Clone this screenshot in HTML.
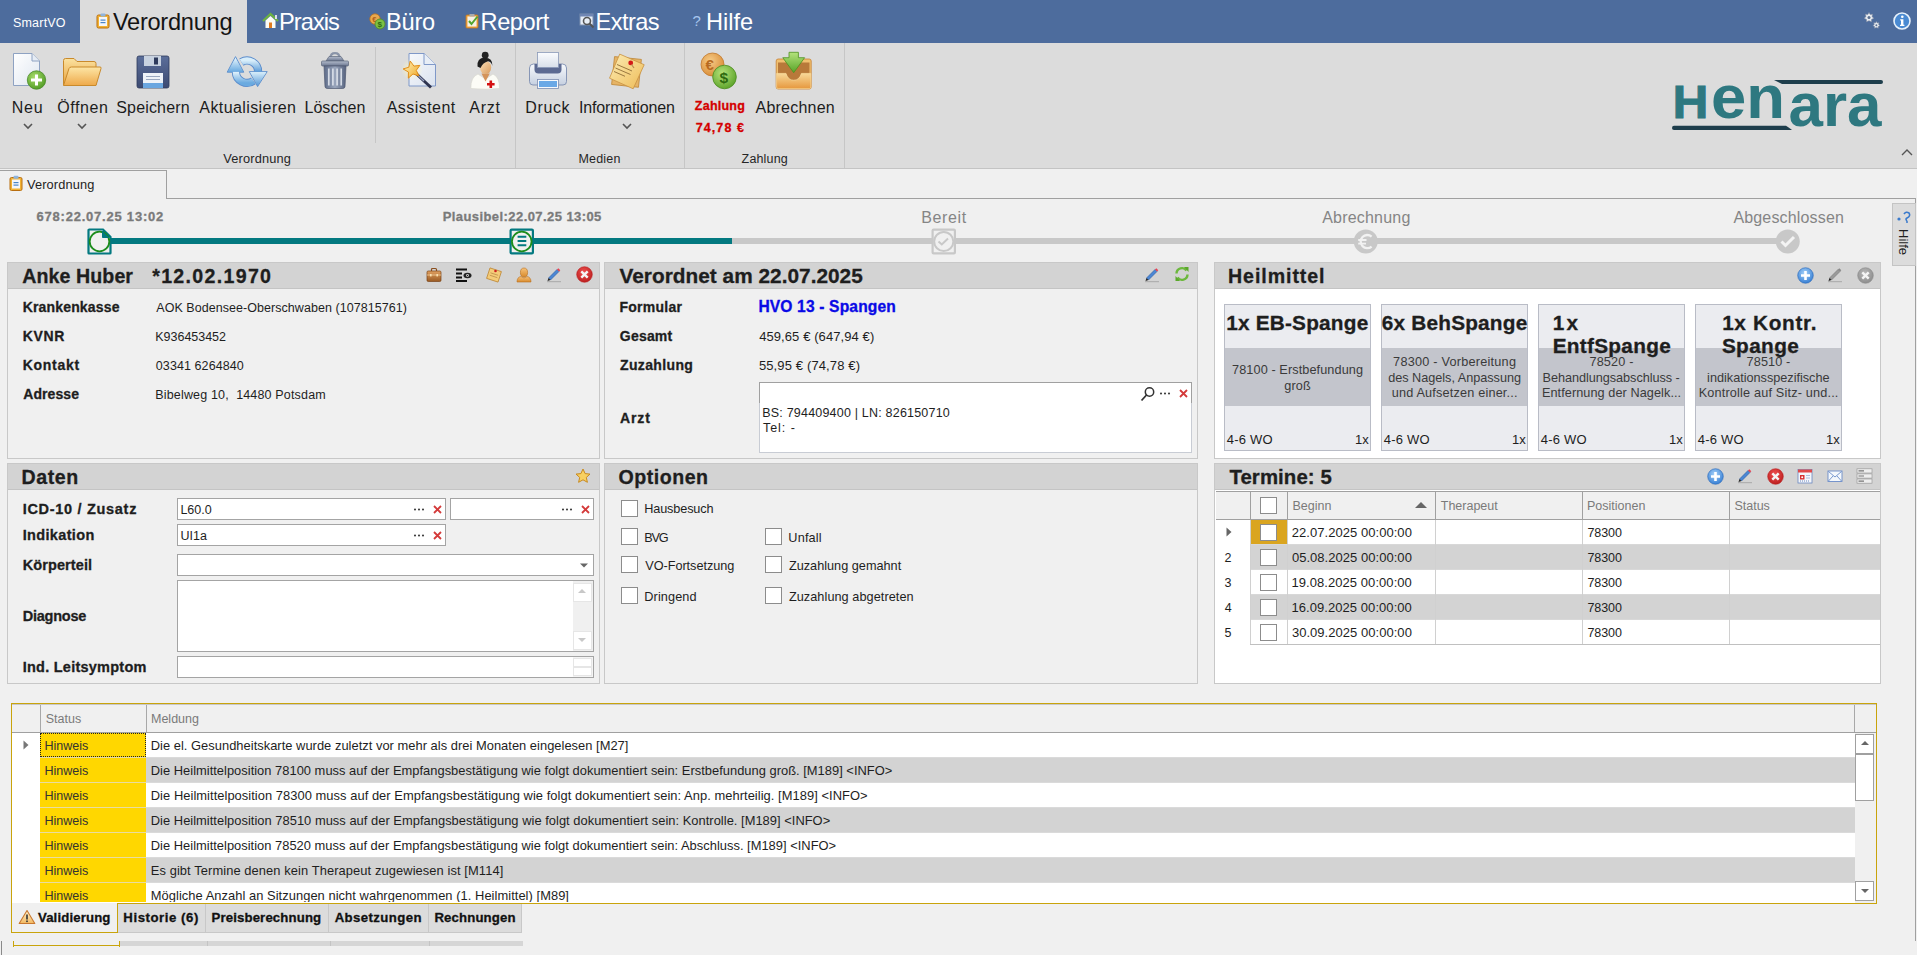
<!DOCTYPE html>
<html><head><meta charset="utf-8"><title>SmartVO</title>
<style>
html,body{margin:0;padding:0;}
body{width:1917px;height:955px;overflow:hidden;position:relative;background:#f0f0f0;font-family:"Liberation Sans",sans-serif;}
.t{position:absolute;line-height:1;white-space:pre;}
.r{position:absolute;}
svg.r{overflow:visible;}
</style></head><body>
<div class="r" style="left:0px;top:0px;width:1917px;height:43px;background:#4d6c9d;"></div>
<div class="r" style="left:80px;top:0px;width:167px;height:43px;background:#dcdcdc;"></div>
<div class="t" style="left:12.94px;top:17.00px;font-size:12.5px;color:#ffffff;letter-spacing:0.208px;">SmartVO</div>
<svg class="r" style="left:96px;top:13px;" width="14" height="16" viewBox="0 0 14 16"><rect x="1" y="2" width="12" height="13" rx="1.5" fill="#f2b233" stroke="#b86e10" stroke-width="1"/><rect x="3" y="4" width="8" height="9" fill="#f4f6fa"/><rect x="4.5" y="0.5" width="5" height="3" rx="1" fill="#8fb4dc"/><rect x="4.5" y="6.5" width="5" height="1.2" fill="#4a86c8"/><rect x="4.5" y="9" width="5" height="1.2" fill="#4a86c8"/></svg>
<div class="t" style="left:112.88px;top:11.00px;font-size:23.6px;color:#141414;letter-spacing:-0.262px;">Verordnung</div>
<svg class="r" style="left:262px;top:13px;" width="17" height="16" viewBox="0 0 17 16"><path d="M1 8 L8.5 1 L16 8" fill="none" stroke="#6cb33f" stroke-width="2.2"/><path d="M3.5 7.5 L8.5 3 L13.5 7.5 V15 H3.5Z" fill="#fbfbf5"/><rect x="7" y="9.5" width="3" height="5.5" fill="#e07b1f"/><rect x="13" y="2" width="2" height="4" fill="#dde"/></svg>
<div class="t" style="left:279.11px;top:11.00px;font-size:23.6px;color:#ffffff;letter-spacing:-0.979px;">Praxis</div>
<svg class="r" style="left:369px;top:13px;" width="17" height="17" viewBox="0 0 17 17"><circle cx="6" cy="6" r="5.2" fill="#e9a94e" stroke="#b86e20" stroke-width="0.8"/><text x="3.2" y="8.6" font-size="7.5" font-family="Liberation Sans" font-weight="bold" fill="#b0601a">€</text><circle cx="11" cy="11" r="5" fill="#7cc043" stroke="#4e8a24" stroke-width="0.8"/><text x="8.6" y="14" font-size="8" font-family="Liberation Sans" font-weight="bold" fill="#2f6b12">$</text></svg>
<div class="t" style="left:385.91px;top:11.00px;font-size:23.6px;color:#ffffff;letter-spacing:-0.188px;">Büro</div>
<svg class="r" style="left:465px;top:13px;" width="15" height="16" viewBox="0 0 15 16"><rect x="1" y="2" width="12" height="13" rx="1" fill="#f2a640" stroke="#c47a20" stroke-width="0.8"/><rect x="2.5" y="3.5" width="9" height="10" fill="#f6f1e6"/><path d="M4 8 L6.5 11 L12.5 3.5" fill="none" stroke="#52a52e" stroke-width="2"/><rect x="4.5" y="1" width="5" height="2.5" fill="#aaa"/></svg>
<div class="t" style="left:480.51px;top:11.00px;font-size:23.6px;color:#ffffff;letter-spacing:-0.399px;">Report</div>
<svg class="r" style="left:579px;top:13px;" width="16" height="16" viewBox="0 0 16 16"><rect x="1" y="1" width="13" height="11" fill="#e8eef6" stroke="#7d8fb0" stroke-width="1"/><rect x="1" y="1" width="13" height="2.5" fill="#6f86b4"/><circle cx="8" cy="8" r="3.5" fill="none" stroke="#555" stroke-width="1.6"/><path d="M10.5 10.5 L14.5 14.5" stroke="#555" stroke-width="2"/></svg>
<div class="t" style="left:595.61px;top:11.00px;font-size:23.6px;color:#ffffff;letter-spacing:-0.578px;">Extras</div>
<div class="t" style="left:692.40px;top:13.00px;font-size:15px;color:#a6c6ee;">?</div>
<div class="t" style="left:706.11px;top:11.00px;font-size:23.6px;color:#ffffff;letter-spacing:-0.063px;">Hilfe</div>
<svg class="r" style="left:1860px;top:9px;" width="24" height="24" viewBox="0 0 24 24"><g fill="#e8ecf2" stroke="#7d8aa0" stroke-width="0.6"><path d="M9 3.5 L10.2 5.6 L12.6 5.2 L12 7.6 L13.8 9.3 L11.5 10.4 L11.5 12.8 L9 11.7 L6.5 12.8 L6.5 10.4 L4.2 9.3 L6 7.6 L5.4 5.2 L7.8 5.6Z"/><path d="M16.4 12.5 L17.3 14 L19 13.8 L18.6 15.5 L19.8 16.7 L18.2 17.5 L18.2 19.2 L16.4 18.4 L14.6 19.2 L14.6 17.5 L13 16.7 L14.2 15.5 L13.8 13.8 L15.5 14Z"/></g><circle cx="9" cy="8.6" r="1.5" fill="#5a6f90"/><circle cx="16.4" cy="16.3" r="1" fill="#5a6f90"/></svg>
<svg class="r" style="left:1893px;top:12px;" width="18" height="18" viewBox="0 0 18 18"><circle cx="9" cy="9" r="8" fill="#4a8ad2" stroke="#e8f2fc" stroke-width="1.6"/><circle cx="9.3" cy="4.8" r="1.3" fill="#fff"/><path d="M7.2 7.3 H10.4 V12.8 H11.4 V14 H7 V12.8 H8 V8.5 H7.2Z" fill="#fff"/></svg>
<div class="r" style="left:0px;top:43px;width:1917px;height:125px;background:#dcdcdc;"></div>
<div class="r" style="left:0px;top:168px;width:1917px;height:1px;background:#c4c4c4;"></div>
<div class="r" style="left:375px;top:47px;width:1px;height:96px;background:#c6c6c6;"></div>
<div class="r" style="left:515px;top:43px;width:1px;height:125px;background:#c6c6c6;"></div>
<div class="r" style="left:684px;top:43px;width:1px;height:125px;background:#c6c6c6;"></div>
<div class="r" style="left:844px;top:43px;width:1px;height:125px;background:#c6c6c6;"></div>
<div class="t" style="left:11.72px;top:100.00px;font-size:16px;color:#1c1c1c;letter-spacing:0.730px;">Neu</div>
<div class="t" style="left:57.18px;top:100.00px;font-size:16px;color:#1c1c1c;letter-spacing:0.600px;">Öffnen</div>
<div class="t" style="left:116.28px;top:100.00px;font-size:16px;color:#1c1c1c;letter-spacing:0.158px;">Speichern</div>
<div class="t" style="left:199.30px;top:100.00px;font-size:16px;color:#1c1c1c;letter-spacing:0.412px;">Aktualisieren</div>
<div class="t" style="left:304.42px;top:100.00px;font-size:16px;color:#1c1c1c;letter-spacing:0.073px;">Löschen</div>
<div class="t" style="left:386.70px;top:100.00px;font-size:16px;color:#1c1c1c;letter-spacing:0.450px;">Assistent</div>
<div class="t" style="left:469.30px;top:100.00px;font-size:16px;color:#1c1c1c;letter-spacing:0.760px;">Arzt</div>
<div class="t" style="left:525.32px;top:100.00px;font-size:16px;color:#1c1c1c;letter-spacing:0.605px;">Druck</div>
<div class="t" style="left:578.96px;top:100.00px;font-size:16px;color:#1c1c1c;letter-spacing:-0.163px;">Informationen</div>
<div class="t" style="left:755.60px;top:100.00px;font-size:16px;color:#1c1c1c;letter-spacing:0.210px;">Abrechnen</div>
<div class="t" style="left:694.83px;top:100.00px;font-size:12.5px;color:#d40000;font-weight:bold;-webkit-text-stroke:0.3px currentColor;letter-spacing:0.237px;">Zahlung</div>
<div class="t" style="left:695.80px;top:122.00px;font-size:12.5px;color:#d40000;font-weight:bold;-webkit-text-stroke:0.3px currentColor;letter-spacing:1.067px;">74,78 €</div>
<div class="t" style="left:223.34px;top:153.00px;font-size:12.8px;color:#262626;letter-spacing:0.147px;">Verordnung</div>
<div class="t" style="left:578.50px;top:153.00px;font-size:12.5px;color:#262626;letter-spacing:0.183px;">Medien</div>
<div class="t" style="left:741.62px;top:153.00px;font-size:12.5px;color:#262626;letter-spacing:0.150px;">Zahlung</div>
<svg class="r" style="left:23px;top:123px;" width="10" height="6" viewBox="0 0 10 6"><path d="M1 1 L5 5 L9 1" fill="none" stroke="#555" stroke-width="1.6"/></svg>
<svg class="r" style="left:77px;top:123px;" width="10" height="6" viewBox="0 0 10 6"><path d="M1 1 L5 5 L9 1" fill="none" stroke="#555" stroke-width="1.6"/></svg>
<svg class="r" style="left:622px;top:123px;" width="10" height="6" viewBox="0 0 10 6"><path d="M1 1 L5 5 L9 1" fill="none" stroke="#555" stroke-width="1.6"/></svg>
<svg class="r" style="left:1901px;top:148px;" width="12" height="8" viewBox="0 0 12 8"><path d="M1 7 L6 2 L11 7" fill="none" stroke="#555" stroke-width="1.4"/></svg>
<svg class="r" style="left:12px;top:52px;" width="36" height="38" viewBox="0 0 36 38"><defs><linearGradient id="pg" x1="0" y1="0" x2="1" y2="1"><stop offset="0" stop-color="#ffffff"/><stop offset="1" stop-color="#dfe6f0"/></linearGradient><radialGradient id="gr" cx="0.4" cy="0.35" r="0.7"><stop offset="0" stop-color="#a8dc6c"/><stop offset="1" stop-color="#4f9a22"/></radialGradient></defs><path d="M1.5 1.5 H20 L27.5 9 V33.5 H1.5Z" fill="url(#pg)" stroke="#8ea2c2" stroke-width="1"/><path d="M20 1.5 V9 H27.5" fill="#e6ecf4" stroke="#8ea2c2" stroke-width="1"/><circle cx="24.5" cy="28" r="9.2" fill="url(#gr)" stroke="#4a8a2a" stroke-width="0.8"/><path d="M24.5 22.5 V33.5 M19 28 H30" stroke="#fff" stroke-width="3"/></svg>
<svg class="r" style="left:62px;top:57px;" width="40" height="30" viewBox="0 0 40 30"><defs><linearGradient id="fo" x1="0" y1="0" x2="0" y2="1"><stop offset="0" stop-color="#fbe2a0"/><stop offset="1" stop-color="#e8a23e"/></linearGradient><linearGradient id="fo2" x1="0" y1="0" x2="0" y2="1"><stop offset="0" stop-color="#fde6a6"/><stop offset="1" stop-color="#eea94a"/></linearGradient></defs><path d="M1.5 28 V3.5 Q1.5 1.5 3.5 1.5 H12 L15 4.5 H32 Q34 4.5 34 6.5 V28Z" fill="url(#fo)" stroke="#c98a2c" stroke-width="1"/><path d="M1.5 28.5 L7 11.5 Q7.5 10 9.5 10 H38 Q39.5 10 39 11.5 L34 28.5Z" fill="url(#fo2)" stroke="#c98a2c" stroke-width="1"/></svg>
<svg class="r" style="left:136px;top:55px;" width="34" height="34" viewBox="0 0 34 34"><defs><linearGradient id="fl" x1="0" y1="0" x2="0" y2="1"><stop offset="0" stop-color="#5b6e9a"/><stop offset="1" stop-color="#3c4a72"/></linearGradient></defs><rect x="1" y="1" width="32" height="32" rx="2" fill="url(#fl)" stroke="#2e3a5c" stroke-width="0.8"/><rect x="8" y="1" width="17" height="10" fill="#c8d2e0"/><rect x="18" y="2.5" width="4" height="7" fill="#2e3a5c"/><rect x="7" y="18" width="20" height="15" fill="#eef2f8"/><rect x="7" y="28" width="20" height="5" fill="#6aa6e0"/><rect x="10" y="21" width="14" height="1" fill="#9aa8c0"/><rect x="10" y="24" width="14" height="1" fill="#9aa8c0"/></svg>
<svg class="r" style="left:226px;top:55px;" width="42" height="34" viewBox="0 0 42 34"><defs><linearGradient id="rf" x1="0" y1="0" x2="0" y2="1"><stop offset="0" stop-color="#e4f4fc"/><stop offset="1" stop-color="#6aaae0"/></linearGradient><linearGradient id="rf2" x1="0" y1="0" x2="0" y2="1"><stop offset="0" stop-color="#d8eefa"/><stop offset="1" stop-color="#5c9cd8"/></linearGradient></defs><path d="M9.9 16.7 A11.1 11.1 0 0 0 27.4 25.8" fill="none" stroke="#5a8ccc" stroke-width="8.2"/><path d="M15.4 7.1 A11.1 11.1 0 0 1 32.1 16.7" fill="none" stroke="#5a8ccc" stroke-width="8.2"/><path d="M9.5 1.6 L17.8 17.2 H1.2Z" fill="url(#rf)" stroke="#5a8ccc" stroke-width="0.9" stroke-linejoin="round"/><path d="M23.3 16.6 H41.2 L31.6 31.6Z" fill="url(#rf2)" stroke="#5a8ccc" stroke-width="0.9" stroke-linejoin="round"/><path d="M9.9 16.7 A11.1 11.1 0 0 0 27.4 25.8" fill="none" stroke="url(#rf)" stroke-width="6.4"/><path d="M15.4 7.1 A11.1 11.1 0 0 1 32.1 16.7" fill="none" stroke="url(#rf2)" stroke-width="6.4"/><path d="M2.3 16.6 L9.5 3.2 L16.7 16.6Z" fill="url(#rf)"/><path d="M24.3 17.2 H40.1 L31.6 30.2Z" fill="url(#rf2)"/></svg>
<svg class="r" style="left:320px;top:52px;" width="30" height="38" viewBox="0 0 30 38"><defs><linearGradient id="tr" x1="0" y1="0" x2="1" y2="0"><stop offset="0" stop-color="#5c6a88"/><stop offset="0.5" stop-color="#9aa6bc"/><stop offset="1" stop-color="#56627e"/></linearGradient><linearGradient id="trl" x1="0" y1="0" x2="0" y2="1"><stop offset="0" stop-color="#b4bccc"/><stop offset="1" stop-color="#6a7690"/></linearGradient></defs><path d="M10.5 6 Q10.5 1.2 15 1.2 Q19.5 1.2 19.5 6" fill="none" stroke="#8a94a8" stroke-width="2.2"/><path d="M6 9 L9 4.5 H21 L24 9Z" fill="url(#trl)" stroke="#5e687c" stroke-width="0.7"/><rect x="1.5" y="9" width="27" height="5" rx="1" fill="url(#trl)" stroke="#5a6478" stroke-width="0.7"/><path d="M4 14 H26 L25 34.5 Q24.8 36.5 22.8 36.5 H7.2 Q5.2 36.5 5 34.5Z" fill="url(#tr)" stroke="#4e5870" stroke-width="0.7"/><path d="M8.8 16.5 V33.5 M12.9 16.5 V33.5 M17.1 16.5 V33.5 M21.2 16.5 V33.5" stroke="#d6dce6" stroke-width="1.7"/></svg>
<svg class="r" style="left:400px;top:51px;" width="38" height="40" viewBox="0 0 38 40"><defs><radialGradient id="glw" cx="0.5" cy="0.5" r="0.5"><stop offset="0" stop-color="#fff8c0" stop-opacity="0.9"/><stop offset="1" stop-color="#fff8c0" stop-opacity="0"/></radialGradient><linearGradient id="stg" x1="0" y1="0" x2="1" y2="1"><stop offset="0" stop-color="#fff4c0"/><stop offset="1" stop-color="#f0a820"/></linearGradient><linearGradient id="apg" x1="0" y1="0" x2="1" y2="1"><stop offset="0" stop-color="#f6f8fc"/><stop offset="1" stop-color="#dbe3ef"/></linearGradient></defs><path d="M9 2.5 H24 L35.5 13.5 V35 H9Z" fill="url(#apg)" stroke="#7f98c8" stroke-width="1"/><path d="M24 2.5 V13.5 H35.5" fill="#e8eef6" stroke="#7f98c8" stroke-width="1"/><circle cx="12" cy="18.5" r="11" fill="url(#glw)"/><path d="M15.5 22 L31 36.5" stroke="#2e3450" stroke-width="3"/><path d="M15.5 22 L24 30" stroke="#9aa4c4" stroke-width="1.2"/><g transform="rotate(-12 12 18.5)"><path d="M12 9.8 L14.6 15.6 L20.6 16.1 L16 20.2 L17.4 26.2 L12 23.1 L6.6 26.2 L8 20.2 L3.4 16.1 L9.4 15.6Z" fill="url(#stg)" stroke="#e08c18" stroke-width="0.9"/></g></svg>
<svg class="r" style="left:469px;top:51px;" width="32" height="40" viewBox="0 0 32 40"><defs><linearGradient id="fc" x1="0" y1="0" x2="1" y2="1"><stop offset="0" stop-color="#fbe0b8"/><stop offset="1" stop-color="#d89a5c"/></linearGradient></defs><path d="M1.8 37.5 Q1.5 26 9 23 L16.5 28 L24 23 Q30.8 26 30.5 37.5 Q16 39 1.8 37.5Z" fill="#fcfcf6" stroke="#d8d8d0" stroke-width="0.7"/><path d="M12.5 22.5 L16.5 30.5 L20.8 22.5Z" fill="#d4945a"/><ellipse cx="16.6" cy="16.5" rx="5.6" ry="6.6" fill="url(#fc)"/><circle cx="16.2" cy="4.2" r="3.4" fill="#222"/><path d="M8.5 15.5 Q7.8 7 15.5 6.8 Q23.8 6.6 23.4 15 Q22.6 11 19 10.2 Q14 11.5 11.5 17 Z" fill="#1e1e1e"/><path d="M21.8 29.5 V37 M18 33.2 H25.6" stroke="#d41010" stroke-width="2.6"/></svg>
<svg class="r" style="left:527px;top:51px;" width="42" height="40" viewBox="0 0 42 40"><defs><linearGradient id="pb" x1="0" y1="0" x2="0" y2="1"><stop offset="0" stop-color="#f8fafd"/><stop offset="1" stop-color="#c6d0e0"/></linearGradient><linearGradient id="pp" x1="0" y1="0" x2="0" y2="1"><stop offset="0" stop-color="#fbfcfe"/><stop offset="1" stop-color="#d8dfea"/></linearGradient></defs><path d="M2.5 17 Q2.5 13 6.5 13 H35.5 Q39.5 13 39.5 17 V30.5 Q39.5 34 36 34 H6 Q2.5 34 2.5 30.5Z" fill="url(#pb)" stroke="#7d8db0" stroke-width="0.9"/><path d="M7.5 13 H34.5 V18.5 Q34.5 22.5 30.5 22.5 H11.5 Q7.5 22.5 7.5 18.5Z" fill="#5c6a92"/><rect x="10.5" y="1.5" width="21" height="15" fill="url(#pp)" stroke="#8a9ab8" stroke-width="0.8"/><rect x="10.5" y="28.5" width="21" height="9" fill="#f6f8fc" stroke="#7d8db0" stroke-width="0.8"/><rect x="12" y="30" width="18" height="6" fill="#6aa8e6"/></svg>
<svg class="r" style="left:607px;top:53px;" width="40" height="39" viewBox="0 0 40 39"><defs><linearGradient id="nt" x1="0" y1="0" x2="1" y2="1"><stop offset="0" stop-color="#fcecb4"/><stop offset="1" stop-color="#eebc58"/></linearGradient></defs><g transform="rotate(6 20 19)"><rect x="6" y="5" width="27" height="28" fill="#e6b466" stroke="#c08838" stroke-width="0.8"/></g><path d="M12.7 1.1 L37.2 11.7 L26.2 35.8 L2.5 25.2Z" fill="url(#nt)" stroke="#c89040" stroke-width="0.8"/><path d="M10 11.5 L25 18 M8.5 15 L23.5 21.5 M7 18.5 L18 23.3" stroke="#9a7840" stroke-width="1"/><circle cx="23.7" cy="9.9" r="2.4" fill="#d41818"/><path d="M24.5 11.5 L27 15" stroke="#b88a50" stroke-width="1.2"/></svg>
<svg class="r" style="left:700px;top:52px;" width="38" height="38" viewBox="0 0 38 38"><defs><radialGradient id="eu" cx="0.4" cy="0.35" r="0.7"><stop offset="0" stop-color="#f6cc88"/><stop offset="1" stop-color="#d88a34"/></radialGradient><radialGradient id="do" cx="0.4" cy="0.35" r="0.7"><stop offset="0" stop-color="#b6e27a"/><stop offset="1" stop-color="#5aa228"/></radialGradient></defs><circle cx="12.5" cy="12.5" r="11.5" fill="url(#eu)" stroke="#c07a30" stroke-width="0.8"/><text x="5.5" y="18" font-size="15" font-family="Liberation Sans" font-weight="bold" fill="#b86a20">€</text><circle cx="24.5" cy="25" r="11.8" fill="url(#do)" stroke="#4a8a1e" stroke-width="0.8"/><text x="19.4" y="31" font-size="15.5" font-family="Liberation Sans" font-weight="bold" fill="#2e6a10">$</text></svg>
<svg class="r" style="left:775px;top:51px;" width="38" height="40" viewBox="0 0 38 40"><defs><linearGradient id="tb" x1="0" y1="0" x2="0" y2="1"><stop offset="0" stop-color="#f8d898"/><stop offset="1" stop-color="#e6983e"/></linearGradient><linearGradient id="ga" x1="0" y1="0" x2="0" y2="1"><stop offset="0" stop-color="#b4e27c"/><stop offset="1" stop-color="#58a428"/></linearGradient></defs><rect x="1.2" y="8" width="35" height="30" rx="2" fill="#f0c070" stroke="#c88030" stroke-width="0.8"/><path d="M3 11.5 H34.5 V22.6 H26.4 Q24.4 29.4 18.7 29.4 Q13 29.4 11 22.6 H3Z" fill="#b8793a"/><path d="M1.6 22.4 H11 Q13 29.2 18.7 29.2 Q24.4 29.2 26.4 22.4 H35.8 V36 Q35.8 37.6 34.2 37.6 H3.2 Q1.6 37.6 1.6 36Z" fill="url(#tb)" stroke="#f8dca0" stroke-width="0.6"/><path d="M14 1.3 H23.4 V6.7 H29.6 L18.7 21.7 L7.8 6.7 H14Z" fill="url(#ga)" stroke="#4e9020" stroke-width="0.8" stroke-linejoin="round"/></svg>
<svg class="r" style="left:1668px;top:76px;" width="220" height="58" viewBox="0 0 220 58"><g fill="#2e7880" font-family="Liberation Sans" font-weight="bold"><text x="4.6" y="41.6" font-size="46" textLength="36" lengthAdjust="spacingAndGlyphs" stroke="#2e7880" stroke-width="0.8">H</text><text x="43" y="41.6" font-size="62" textLength="74" lengthAdjust="spacingAndGlyphs">en</text><text x="120.5" y="49.7" font-size="62" textLength="93" lengthAdjust="spacingAndGlyphs">ara</text></g><path d="M106 4 H213 Q215 4 215 6 Q215 8 213 8 H114 Q110 6 106 4Z" fill="#1e3e4c"/><path d="M6 49.7 H118 Q121 51.5 124 54 H6 Q4 54 4 51.9 Q4 49.7 6 49.7Z" fill="#1e3e4c"/></svg>
<div class="r" style="left:0px;top:170px;width:167px;height:29px;background:#f0f0f0;box-sizing:border-box;border:1px solid #a0a0a0;border-left:none;border-bottom:none;"></div>
<div class="r" style="left:166px;top:198px;width:1750px;height:1px;background:#a0a0a0;"></div>
<div class="r" style="left:1915px;top:198px;width:1px;height:743px;background:#a0a0a0;"></div>
<svg class="r" style="left:9px;top:175px;" width="14" height="17" viewBox="0 0 14 17"><rect x="1" y="2.5" width="12" height="13" rx="1.5" fill="#f2b233" stroke="#b86e10" stroke-width="1"/><rect x="3" y="4.5" width="8" height="9" fill="#f4f6fa"/><rect x="4.5" y="0.8" width="5" height="3" rx="1" fill="#8fb4dc"/><rect x="4.5" y="7" width="5" height="1.2" fill="#4a86c8"/><rect x="4.5" y="9.5" width="5" height="1.2" fill="#4a86c8"/></svg>
<div class="t" style="left:26.94px;top:179.00px;font-size:12.8px;color:#1e1e1e;letter-spacing:0.147px;">Verordnung</div>
<div class="r" style="left:1892px;top:203px;width:24px;height:63px;background:#dcdcdc;box-sizing:border-box;border:1px solid #c4c4c4;"></div>
<svg class="r" style="left:1895px;top:210px;" width="18" height="14" viewBox="0 0 18 14"><circle cx="4" cy="9" r="1.6" fill="#3a7acc"/><path d="M9 4 Q11 1 14 3 Q16 6 12 8 Q10 9 12 11" fill="none" stroke="#3a7acc" stroke-width="1.6"/><circle cx="12" cy="12" r="1" fill="#3a7acc"/></svg>
<div class="t" style="left:1910px;top:229px;font-size:13px;color:#1e1e1e;transform-origin:0 0;transform:rotate(90deg);">Hilfe</div>
<div class="r" style="left:99px;top:238px;width:633px;height:6px;background:#037980;"></div>
<div class="r" style="left:732px;top:238px;width:1056px;height:6px;background:#c8c8c8;"></div>
<div class="t" style="left:36.55px;top:210.00px;font-size:13px;color:#7a7a7a;font-weight:bold;-webkit-text-stroke:0.3px currentColor;letter-spacing:0.776px;">678:22.07.25 13:02</div>
<div class="t" style="left:442.65px;top:210.00px;font-size:13px;color:#7a7a7a;font-weight:bold;-webkit-text-stroke:0.3px currentColor;letter-spacing:0.427px;">Plausibel:22.07.25 13:05</div>
<div class="t" style="left:921.32px;top:210.00px;font-size:16px;color:#858585;letter-spacing:0.600px;">Bereit</div>
<div class="t" style="left:1322.20px;top:210.00px;font-size:16px;color:#858585;letter-spacing:0.200px;">Abrechnung</div>
<div class="t" style="left:1733.40px;top:210.00px;font-size:16px;color:#858585;letter-spacing:0.163px;">Abgeschlossen</div>
<svg class="r" style="left:87px;top:228px;" width="26" height="27" viewBox="0 0 26 27"><path d="M1.5 2.2 Q1.5 1.5 2.2 1.5 H16 L23.5 9 V25 Q23.5 25.5 23 25.5 H2 Q1.5 25.5 1.5 25Z" fill="#f0f0f0" stroke="#037980" stroke-width="2.2"/><path d="M16 1.5 V9.5 H23.5Z" fill="#037980"/><circle cx="12.5" cy="13.5" r="9.8" fill="none" stroke="#1c8c1c" stroke-width="1.8"/><path d="M15.5 3 V9.5 H22" fill="#037980" stroke="#037980" stroke-width="1"/></svg>
<svg class="r" style="left:509px;top:228px;" width="26" height="27" viewBox="0 0 26 27"><rect x="1.6" y="1.6" width="22.3" height="23.8" rx="1" fill="#f0f0f0" stroke="#037980" stroke-width="2.2"/><circle cx="12.75" cy="13.5" r="9.8" fill="none" stroke="#1c8c1c" stroke-width="1.8"/><path d="M8.6 8.8 H17.3 M8.6 13 H17.3 M8.6 17.2 H17.3" stroke="#037980" stroke-width="2"/></svg>
<svg class="r" style="left:931px;top:228px;" width="26" height="27" viewBox="0 0 26 27"><rect x="1.6" y="1.6" width="22.3" height="23.8" rx="1" fill="#f0f0f0" stroke="#c8c8c8" stroke-width="2.2"/><circle cx="12.75" cy="13.5" r="9.6" fill="none" stroke="#c8c8c8" stroke-width="2"/><path d="M7.5 13.5 L10.8 16.5 L17 10.5" fill="none" stroke="#c8c8c8" stroke-width="2"/></svg>
<svg class="r" style="left:1353px;top:228px;" width="26" height="27" viewBox="0 0 26 27"><circle cx="12.75" cy="13.5" r="12" fill="#c8c8c8"/><path d="M18.6 8.6 A6.6 6.6 0 1 0 18.6 18.6" fill="none" stroke="#f2f2f2" stroke-width="2.3"/><path d="M5.2 12 H13.5 M5.2 15.6 H13" stroke="#f2f2f2" stroke-width="1.8"/></svg>
<svg class="r" style="left:1775px;top:228px;" width="26" height="27" viewBox="0 0 26 27"><circle cx="12.75" cy="13.5" r="12" fill="#c8c8c8"/><path d="M6.5 13.5 L10.5 17.5 L19 9" fill="none" stroke="#f4f4f4" stroke-width="3"/></svg>
<div class="r" style="left:7px;top:262px;width:593px;height:197px;background:#f0f0f0;box-sizing:border-box;border:1px solid #c8c8c8;"></div>
<div class="r" style="left:8px;top:263px;width:591px;height:25px;background:#d3d3d3;"></div>
<div class="r" style="left:8px;top:288px;width:591px;height:1px;background:#c4c4c4;"></div>
<div class="r" style="left:604px;top:262px;width:594px;height:197px;background:#f0f0f0;box-sizing:border-box;border:1px solid #c8c8c8;"></div>
<div class="r" style="left:605px;top:263px;width:592px;height:25px;background:#d3d3d3;"></div>
<div class="r" style="left:605px;top:288px;width:592px;height:1px;background:#c4c4c4;"></div>
<div class="r" style="left:1214px;top:262px;width:667px;height:197px;background:#ffffff;box-sizing:border-box;border:1px solid #c8c8c8;"></div>
<div class="r" style="left:1215px;top:263px;width:665px;height:25px;background:#d3d3d3;"></div>
<div class="r" style="left:1215px;top:288px;width:665px;height:1px;background:#c4c4c4;"></div>
<div class="r" style="left:7px;top:463px;width:593px;height:221px;background:#f0f0f0;box-sizing:border-box;border:1px solid #c8c8c8;"></div>
<div class="r" style="left:8px;top:464px;width:591px;height:25px;background:#d3d3d3;"></div>
<div class="r" style="left:8px;top:489px;width:591px;height:1px;background:#c4c4c4;"></div>
<div class="r" style="left:604px;top:463px;width:594px;height:221px;background:#f0f0f0;box-sizing:border-box;border:1px solid #c8c8c8;"></div>
<div class="r" style="left:605px;top:464px;width:592px;height:25px;background:#d3d3d3;"></div>
<div class="r" style="left:605px;top:489px;width:592px;height:1px;background:#c4c4c4;"></div>
<div class="r" style="left:1214px;top:463px;width:667px;height:221px;background:#ffffff;box-sizing:border-box;border:1px solid #c8c8c8;"></div>
<div class="r" style="left:1215px;top:464px;width:665px;height:25px;background:#d3d3d3;"></div>
<div class="r" style="left:1215px;top:489px;width:665px;height:1px;background:#c4c4c4;"></div>
<div class="t" style="left:22.31px;top:267.00px;font-size:19.6px;color:#1e1e1e;font-weight:bold;-webkit-text-stroke:0.3px currentColor;letter-spacing:0.081px;">Anke Huber</div>
<div class="t" style="left:152.20px;top:267.00px;font-size:19.6px;color:#1e1e1e;font-weight:bold;-webkit-text-stroke:0.3px currentColor;letter-spacing:1.314px;">*12.02.1970</div>
<svg class="r" style="left:426px;top:267px;" width="16" height="16" viewBox="0 0 16 16"><defs><linearGradient id="bc" x1="0" y1="0" x2="0" y2="1"><stop offset="0" stop-color="#e0a060"/><stop offset="1" stop-color="#9a5a22"/></linearGradient></defs><path d="M5.5 4 V2.5 Q5.5 1.5 6.5 1.5 H9.5 Q10.5 1.5 10.5 2.5 V4" fill="none" stroke="#8a5020" stroke-width="1.2"/><rect x="1" y="4" width="14" height="10.5" rx="1.2" fill="url(#bc)" stroke="#7a4418" stroke-width="0.7"/><path d="M1 8 H15" stroke="#f4d2a0" stroke-width="0.8"/><rect x="4" y="7" width="1.6" height="2.4" fill="#f8e0b0"/><rect x="10.4" y="7" width="1.6" height="2.4" fill="#f8e0b0"/></svg>
<svg class="r" style="left:455px;top:267px;" width="17" height="16" viewBox="0 0 17 16"><path d="M1 2.5 H12 M1 6.5 H7 M1 10.5 H7 M1 14 H12" stroke="#111" stroke-width="1.8"/><ellipse cx="12.5" cy="8.5" rx="4" ry="2.8" fill="#222"/><circle cx="12.5" cy="8.5" r="1.4" fill="#ddd"/><circle cx="12.5" cy="8.5" r="0.7" fill="#222"/></svg>
<svg class="r" style="left:486px;top:267px;" width="16" height="16" viewBox="0 0 16 16"><g transform="rotate(18 8 8)"><rect x="2" y="2.5" width="12" height="11" fill="#f4cc78" stroke="#c08a3a" stroke-width="0.8"/><path d="M4 7 H12 M4 9.5 H12" stroke="#b88a48" stroke-width="0.7"/></g><circle cx="9.5" cy="4" r="1.3" fill="#d02020"/></svg>
<svg class="r" style="left:516px;top:267px;" width="16" height="16" viewBox="0 0 16 16"><defs><linearGradient id="ps" x1="0" y1="0" x2="0" y2="1"><stop offset="0" stop-color="#f6c27a"/><stop offset="1" stop-color="#d88a2c"/></linearGradient></defs><ellipse cx="8" cy="5.5" rx="3.6" ry="4.5" fill="url(#ps)" stroke="#b86e1e" stroke-width="0.6"/><path d="M1 15 Q1 10 5 9.5 L8 11 L11 9.5 Q15 10 15 15Z" fill="url(#ps)" stroke="#b86e1e" stroke-width="0.6"/></svg>
<svg class="r" style="left:546px;top:266px;" width="16" height="16" viewBox="0 0 16 16"><path d="M2.5 12 L11 3.5 L13 5.5 L4.5 14Z" fill="#4a86d4" stroke="#2a5aa0" stroke-width="0.6"/><path d="M11 3.5 L12.3 2.2 L14.3 4.2 L13 5.5Z" fill="#e84050"/><path d="M2.5 12 L1.5 15 L4.5 14Z" fill="#222"/><rect x="1" y="15" width="14" height="1.2" fill="#b0b0b0"/></svg>
<svg class="r" style="left:576px;top:266px;" width="17" height="17" viewBox="0 0 17 17"><defs><radialGradient id="rx0" cx="0.45" cy="0.35" r="0.7"><stop offset="0" stop-color="#f05050"/><stop offset="1" stop-color="#b81c1c"/></radialGradient></defs><circle cx="8.5" cy="8.5" r="7.8" fill="url(#rx0)" stroke="#b81c1c" stroke-width="0.6"/><path d="M5.3 5.3 L11.7 11.7 M11.7 5.3 L5.3 11.7" stroke="#f4f4f4" stroke-width="2.4"/></svg>
<div class="t" style="left:22.69px;top:300.00px;font-size:14px;color:#1e1e1e;font-weight:bold;-webkit-text-stroke:0.3px currentColor;letter-spacing:0.162px;">Krankenkasse</div>
<div class="t" style="left:156.30px;top:302.00px;font-size:12.5px;color:#1e1e1e;letter-spacing:0.050px;">AOK Bodensee-Oberschwaben (107815761)</div>
<div class="t" style="left:22.69px;top:329.00px;font-size:14px;color:#1e1e1e;font-weight:bold;-webkit-text-stroke:0.3px currentColor;letter-spacing:0.657px;">KVNR</div>
<div class="t" style="left:155.30px;top:331.00px;font-size:12.5px;color:#1e1e1e;letter-spacing:-0.028px;">K936453452</div>
<div class="t" style="left:22.69px;top:358.00px;font-size:14px;color:#1e1e1e;font-weight:bold;-webkit-text-stroke:0.3px currentColor;letter-spacing:0.728px;">Kontakt</div>
<div class="t" style="left:155.80px;top:360.00px;font-size:12.5px;color:#1e1e1e;letter-spacing:0.089px;">03341 6264840</div>
<div class="t" style="left:23.25px;top:387.00px;font-size:14px;color:#1e1e1e;font-weight:bold;-webkit-text-stroke:0.3px currentColor;letter-spacing:0.068px;">Adresse</div>
<div class="t" style="left:155.30px;top:389.00px;font-size:12.5px;color:#1e1e1e;letter-spacing:0.165px;">Bibelweg 10,  14480 Potsdam</div>
<div class="t" style="left:619.50px;top:266.00px;font-size:20.8px;color:#1e1e1e;font-weight:bold;-webkit-text-stroke:0.3px currentColor;letter-spacing:0.022px;">Verordnet am 22.07.2025</div>
<svg class="r" style="left:1144px;top:266px;" width="16" height="16" viewBox="0 0 16 16"><path d="M2.5 12 L11 3.5 L13 5.5 L4.5 14Z" fill="#4a86d4" stroke="#2a5aa0" stroke-width="0.6"/><path d="M11 3.5 L12.3 2.2 L14.3 4.2 L13 5.5Z" fill="#e84050"/><path d="M2.5 12 L1.5 15 L4.5 14Z" fill="#222"/><rect x="1" y="15" width="14" height="1.2" fill="#b0b0b0"/></svg>
<svg class="r" style="left:1174px;top:266px;" width="16" height="16" viewBox="0 0 16 16"><path d="M2.5 7.5 A5.5 5.5 0 0 1 12.5 4.5" fill="none" stroke="#6cb83c" stroke-width="2.4"/><path d="M10 1 L14.5 1 L14.5 6 Z" fill="#5aa82a"/><path d="M13.5 8.5 A5.5 5.5 0 0 1 3.5 11.5" fill="none" stroke="#6cb83c" stroke-width="2.4"/><path d="M6 15 L1.5 15 L1.5 10 Z" fill="#5aa82a"/></svg>
<div class="t" style="left:619.49px;top:300.00px;font-size:14px;color:#1e1e1e;font-weight:bold;-webkit-text-stroke:0.3px currentColor;letter-spacing:0.247px;">Formular</div>
<div class="t" style="left:619.84px;top:329.00px;font-size:14px;color:#1e1e1e;font-weight:bold;-webkit-text-stroke:0.3px currentColor;letter-spacing:0.198px;">Gesamt</div>
<div class="t" style="left:619.98px;top:358.00px;font-size:14px;color:#1e1e1e;font-weight:bold;-webkit-text-stroke:0.3px currentColor;letter-spacing:0.366px;">Zuzahlung</div>
<div class="t" style="left:620.05px;top:411.00px;font-size:14px;color:#1e1e1e;font-weight:bold;-webkit-text-stroke:0.3px currentColor;letter-spacing:0.877px;">Arzt</div>
<div class="t" style="left:758.39px;top:299.00px;font-size:15.6px;color:#0a0ae6;font-weight:bold;-webkit-text-stroke:0.3px currentColor;letter-spacing:0.153px;">HVO 13 - Spangen</div>
<div class="t" style="left:759.14px;top:330.00px;font-size:13px;color:#1e1e1e;letter-spacing:0.090px;">459,65 € (647,94 €)</div>
<div class="t" style="left:758.88px;top:359.00px;font-size:13px;color:#1e1e1e;letter-spacing:0.132px;">55,95 € (74,78 €)</div>
<div class="r" style="left:759px;top:382px;width:433px;height:71px;background:#ffffff;box-sizing:border-box;border:1px solid #c8ccd4;"></div>
<div class="r" style="left:759px;top:382px;width:433px;height:21px;box-sizing:border-box;border:1px solid #a0a0a0;border-bottom:none;"></div>
<svg class="r" style="left:1140px;top:386px;" width="16" height="16" viewBox="0 0 16 16"><circle cx="9.5" cy="6" r="4.2" fill="none" stroke="#333" stroke-width="1.5"/><path d="M6.5 9 L1.5 14.5" stroke="#333" stroke-width="1.8"/></svg>
<svg class="r" style="left:1160px;top:392px;" width="10" height="3" viewBox="0 0 10 3"><circle cx="1" cy="1.5" r="1.05" fill="#3a3a3a"/><circle cx="5" cy="1.5" r="1.05" fill="#3a3a3a"/><circle cx="9" cy="1.5" r="1.05" fill="#3a3a3a"/></svg>
<svg class="r" style="left:1179px;top:389px;" width="9" height="9" viewBox="0 0 9 9"><path d="M1 1 L8 8 M8 1 L1 8" stroke="#d43a3a" stroke-width="1.8"/></svg>
<div class="t" style="left:762.30px;top:407.00px;font-size:12.5px;color:#1e1e1e;letter-spacing:0.199px;">BS: 794409400 | LN: 826150710</div>
<div class="t" style="left:763.05px;top:422.00px;font-size:12.5px;color:#1e1e1e;letter-spacing:0.938px;">Tel: -</div>
<div class="t" style="left:1228.03px;top:267.00px;font-size:19.6px;color:#1e1e1e;font-weight:bold;-webkit-text-stroke:0.3px currentColor;letter-spacing:0.928px;">Heilmittel</div>
<svg class="r" style="left:1797px;top:267px;" width="17" height="17" viewBox="0 0 17 17"><defs><radialGradient id="pl" cx="0.45" cy="0.35" r="0.7"><stop offset="0" stop-color="#a6d2fa"/><stop offset="1" stop-color="#2e78d0"/></radialGradient></defs><circle cx="8.5" cy="8.5" r="7.8" fill="url(#pl)" stroke="#2a68b8" stroke-width="0.6"/><path d="M8.5 4 V13 M4 8.5 H13" stroke="#fff" stroke-width="2.6"/></svg>
<svg class="r" style="left:1827px;top:266px;" width="16" height="16" viewBox="0 0 16 16"><path d="M2.5 12 L11 3.5 L13 5.5 L4.5 14Z" fill="#9a9a9a" stroke="#777" stroke-width="0.6"/><path d="M11 3.5 L12.3 2.2 L14.3 4.2 L13 5.5Z" fill="#888"/><path d="M2.5 12 L1.5 15 L4.5 14Z" fill="#222"/><rect x="1" y="15" width="14" height="1.2" fill="#b0b0b0"/></svg>
<svg class="r" style="left:1857px;top:267px;" width="17" height="17" viewBox="0 0 17 17"><defs><radialGradient id="rx1" cx="0.45" cy="0.35" r="0.7"><stop offset="0" stop-color="#b8b8b8"/><stop offset="1" stop-color="#8a8a8a"/></radialGradient></defs><circle cx="8.5" cy="8.5" r="7.8" fill="url(#rx1)" stroke="#8a8a8a" stroke-width="0.6"/><path d="M5.3 5.3 L11.7 11.7 M11.7 5.3 L5.3 11.7" stroke="#f4f4f4" stroke-width="2.4"/></svg>
<div class="r" style="left:1224px;top:304px;width:147px;height:147px;background:#ebecf0;box-sizing:border-box;border:1px solid #b9bcc6;"></div>
<div class="r" style="left:1225px;top:348px;width:145px;height:58px;background:#c3c5cc;"></div>
<div class="t" style="left:1232.07px;top:364.00px;font-size:12.7px;color:#3a3a3a;letter-spacing:0.092px;">78100 - Erstbefundung</div>
<div class="t" style="left:1284.19px;top:380.00px;font-size:12.7px;color:#3a3a3a;letter-spacing:0.173px;">groß</div>
<div class="t" style="left:1226.25px;top:313.00px;font-size:20.8px;color:#1e1e1e;font-weight:bold;-webkit-text-stroke:0.3px currentColor;letter-spacing:0.191px;">1x EB-Spange</div>
<div class="t" style="left:1226.74px;top:433.00px;font-size:13px;color:#1e1e1e;letter-spacing:0.225px;">4-6 WO</div>
<div class="t" style="left:1355.03px;top:433.00px;font-size:13px;color:#1e1e1e;letter-spacing:-0.110px;">1x</div>
<div class="r" style="left:1381px;top:304px;width:147px;height:147px;background:#ebecf0;box-sizing:border-box;border:1px solid #b9bcc6;"></div>
<div class="r" style="left:1382px;top:348px;width:145px;height:58px;background:#c3c5cc;"></div>
<div class="t" style="left:1393.12px;top:356.00px;font-size:12.7px;color:#3a3a3a;letter-spacing:0.229px;">78300 - Vorbereitung</div>
<div class="t" style="left:1388.19px;top:372.00px;font-size:12.7px;color:#3a3a3a;letter-spacing:-0.024px;">des Nagels, Anpassung</div>
<div class="t" style="left:1391.72px;top:387.00px;font-size:12.7px;color:#3a3a3a;letter-spacing:0.179px;">und Aufsetzen einer...</div>
<div class="t" style="left:1381.77px;top:313.00px;font-size:20.8px;color:#1e1e1e;font-weight:bold;-webkit-text-stroke:0.3px currentColor;letter-spacing:0.195px;">6x BehSpange</div>
<div class="t" style="left:1383.74px;top:433.00px;font-size:13px;color:#1e1e1e;letter-spacing:0.225px;">4-6 WO</div>
<div class="t" style="left:1512.03px;top:433.00px;font-size:13px;color:#1e1e1e;letter-spacing:-0.110px;">1x</div>
<div class="r" style="left:1538px;top:304px;width:147px;height:147px;background:#ebecf0;box-sizing:border-box;border:1px solid #b9bcc6;"></div>
<div class="r" style="left:1539px;top:348px;width:145px;height:58px;background:#c3c5cc;"></div>
<div class="t" style="left:1589.46px;top:356.00px;font-size:12.7px;color:#3a3a3a;letter-spacing:0.148px;">78520 -</div>
<div class="t" style="left:1542.58px;top:372.00px;font-size:12.7px;color:#3a3a3a;letter-spacing:-0.050px;">Behandlungsabschluss -</div>
<div class="t" style="left:1541.93px;top:387.00px;font-size:12.7px;color:#3a3a3a;letter-spacing:0.072px;">Entfernung der Nagelk...</div>
<div class="t" style="left:1552.75px;top:313.00px;font-size:20.8px;color:#1e1e1e;font-weight:bold;-webkit-text-stroke:0.3px currentColor;letter-spacing:2.164px;">1x</div>
<div class="t" style="left:1552.65px;top:336.00px;font-size:20.8px;color:#1e1e1e;font-weight:bold;-webkit-text-stroke:0.3px currentColor;letter-spacing:0.282px;">EntfSpange</div>
<div class="t" style="left:1540.74px;top:433.00px;font-size:13px;color:#1e1e1e;letter-spacing:0.225px;">4-6 WO</div>
<div class="t" style="left:1669.03px;top:433.00px;font-size:13px;color:#1e1e1e;letter-spacing:-0.110px;">1x</div>
<div class="r" style="left:1695px;top:304px;width:147px;height:147px;background:#ebecf0;box-sizing:border-box;border:1px solid #b9bcc6;"></div>
<div class="r" style="left:1696px;top:348px;width:145px;height:58px;background:#c3c5cc;"></div>
<div class="t" style="left:1746.57px;top:356.00px;font-size:12.7px;color:#3a3a3a;letter-spacing:0.115px;">78510 -</div>
<div class="t" style="left:1707.12px;top:372.00px;font-size:12.7px;color:#3a3a3a;letter-spacing:-0.015px;">indikationsspezifische</div>
<div class="t" style="left:1698.63px;top:387.00px;font-size:12.7px;color:#3a3a3a;letter-spacing:0.174px;">Kontrolle auf Sitz- und...</div>
<div class="t" style="left:1722.15px;top:313.00px;font-size:20.8px;color:#1e1e1e;font-weight:bold;-webkit-text-stroke:0.3px currentColor;letter-spacing:0.660px;">1x Kontr.</div>
<div class="t" style="left:1721.88px;top:336.00px;font-size:20.8px;color:#1e1e1e;font-weight:bold;-webkit-text-stroke:0.3px currentColor;letter-spacing:0.353px;">Spange</div>
<div class="t" style="left:1697.74px;top:433.00px;font-size:13px;color:#1e1e1e;letter-spacing:0.225px;">4-6 WO</div>
<div class="t" style="left:1826.03px;top:433.00px;font-size:13px;color:#1e1e1e;letter-spacing:-0.110px;">1x</div>
<div class="t" style="left:21.53px;top:468.00px;font-size:19.6px;color:#1e1e1e;font-weight:bold;-webkit-text-stroke:0.3px currentColor;letter-spacing:0.540px;">Daten</div>
<svg class="r" style="left:575px;top:468px;" width="16" height="16" viewBox="0 0 16 16"><path d="M8 1 L10.1 5.6 L15 6.1 L11.3 9.4 L12.4 14.3 L8 11.8 L3.6 14.3 L4.7 9.4 L1 6.1 L5.9 5.6Z" fill="#f8d060" stroke="#c88a20" stroke-width="1"/></svg>
<div class="t" style="left:22.66px;top:502.00px;font-size:14.5px;color:#1e1e1e;font-weight:bold;-webkit-text-stroke:0.3px currentColor;letter-spacing:0.699px;">ICD-10 / Zusatz</div>
<div class="t" style="left:22.66px;top:528.00px;font-size:14.5px;color:#1e1e1e;font-weight:bold;-webkit-text-stroke:0.3px currentColor;letter-spacing:0.352px;">Indikation</div>
<div class="t" style="left:22.66px;top:558.00px;font-size:14.5px;color:#1e1e1e;font-weight:bold;-webkit-text-stroke:0.3px currentColor;letter-spacing:0.105px;">Körperteil</div>
<div class="t" style="left:22.66px;top:609.00px;font-size:14.5px;color:#1e1e1e;font-weight:bold;-webkit-text-stroke:0.3px currentColor;letter-spacing:-0.214px;">Diagnose</div>
<div class="t" style="left:22.66px;top:660.00px;font-size:14.5px;color:#1e1e1e;font-weight:bold;-webkit-text-stroke:0.3px currentColor;letter-spacing:0.250px;">Ind. Leitsymptom</div>
<div class="r" style="left:177px;top:498px;width:269px;height:22px;background:#fff;box-sizing:border-box;border:1px solid #a4a4a4;"></div>
<div class="r" style="left:450px;top:498px;width:144px;height:22px;background:#fff;box-sizing:border-box;border:1px solid #a4a4a4;"></div>
<div class="r" style="left:177px;top:524px;width:269px;height:22px;background:#fff;box-sizing:border-box;border:1px solid #a4a4a4;"></div>
<div class="r" style="left:177px;top:554px;width:417px;height:22px;background:#fff;box-sizing:border-box;border:1px solid #a4a4a4;"></div>
<div class="r" style="left:177px;top:580px;width:417px;height:72px;background:#fff;box-sizing:border-box;border:1px solid #a4a4a4;"></div>
<div class="r" style="left:177px;top:656px;width:417px;height:22px;background:#fff;box-sizing:border-box;border:1px solid #a4a4a4;"></div>
<svg class="r" style="left:414px;top:508px;" width="10" height="3" viewBox="0 0 10 3"><circle cx="1" cy="1.5" r="1.05" fill="#3a3a3a"/><circle cx="5" cy="1.5" r="1.05" fill="#3a3a3a"/><circle cx="9" cy="1.5" r="1.05" fill="#3a3a3a"/></svg>
<svg class="r" style="left:562px;top:508px;" width="10" height="3" viewBox="0 0 10 3"><circle cx="1" cy="1.5" r="1.05" fill="#3a3a3a"/><circle cx="5" cy="1.5" r="1.05" fill="#3a3a3a"/><circle cx="9" cy="1.5" r="1.05" fill="#3a3a3a"/></svg>
<svg class="r" style="left:414px;top:534px;" width="10" height="3" viewBox="0 0 10 3"><circle cx="1" cy="1.5" r="1.05" fill="#3a3a3a"/><circle cx="5" cy="1.5" r="1.05" fill="#3a3a3a"/><circle cx="9" cy="1.5" r="1.05" fill="#3a3a3a"/></svg>
<svg class="r" style="left:433px;top:505px;" width="9" height="9" viewBox="0 0 9 9"><path d="M1 1 L8 8 M8 1 L1 8" stroke="#d43a3a" stroke-width="1.8"/></svg>
<svg class="r" style="left:581px;top:505px;" width="9" height="9" viewBox="0 0 9 9"><path d="M1 1 L8 8 M8 1 L1 8" stroke="#d43a3a" stroke-width="1.8"/></svg>
<svg class="r" style="left:433px;top:531px;" width="9" height="9" viewBox="0 0 9 9"><path d="M1 1 L8 8 M8 1 L1 8" stroke="#d43a3a" stroke-width="1.8"/></svg>
<div class="t" style="left:180.40px;top:504.00px;font-size:12.5px;color:#1e1e1e;">L60.0</div>
<div class="t" style="left:180.46px;top:530.00px;font-size:12.5px;color:#1e1e1e;">UI1a</div>
<svg class="r" style="left:579px;top:562px;" width="10" height="6" viewBox="0 0 10 6"><path d="M1 1.5 H9 L5 5.5Z" fill="#666"/></svg>
<div class="r" style="left:573px;top:581px;width:20px;height:70px;background:#f0f0f0;"></div>
<div class="r" style="left:573px;top:583px;width:19px;height:19px;background:#ffffff;box-sizing:border-box;border:1px solid #e6e6e6;"></div>
<div class="r" style="left:573px;top:631px;width:19px;height:19px;background:#ffffff;box-sizing:border-box;border:1px solid #e6e6e6;"></div>
<svg class="r" style="left:577px;top:588px;" width="10" height="6" viewBox="0 0 10 6"><path d="M1 5 H9 L5 1Z" fill="#c8c8c8"/></svg>
<svg class="r" style="left:577px;top:637px;" width="10" height="6" viewBox="0 0 10 6"><path d="M1 1 H9 L5 5Z" fill="#c8c8c8"/></svg>
<div class="r" style="left:573px;top:657px;width:20px;height:20px;background:#f4f4f4;"></div>
<div class="r" style="left:573px;top:658px;width:19px;height:9px;background:#ffffff;box-sizing:border-box;border:1px solid #e6e6e6;"></div>
<div class="r" style="left:573px;top:667px;width:19px;height:9px;background:#ffffff;box-sizing:border-box;border:1px solid #e6e6e6;"></div>
<div class="t" style="left:618.52px;top:468.00px;font-size:19.6px;color:#1e1e1e;font-weight:bold;-webkit-text-stroke:0.3px currentColor;letter-spacing:0.502px;">Optionen</div>
<div class="r" style="left:621px;top:499.5px;width:17px;height:17px;background:#ffffff;box-sizing:border-box;border:1px solid #8c8c8c;"></div>
<div class="t" style="left:644.28px;top:503.00px;font-size:12.7px;color:#1e1e1e;letter-spacing:-0.141px;">Hausbesuch</div>
<div class="r" style="left:621px;top:528px;width:17px;height:17px;background:#ffffff;box-sizing:border-box;border:1px solid #8c8c8c;"></div>
<div class="t" style="left:644.28px;top:532.00px;font-size:12.7px;color:#1e1e1e;letter-spacing:-1.246px;">BVG</div>
<div class="r" style="left:621px;top:556px;width:17px;height:17px;background:#ffffff;box-sizing:border-box;border:1px solid #8c8c8c;"></div>
<div class="t" style="left:645.24px;top:560.00px;font-size:12.7px;color:#1e1e1e;letter-spacing:-0.039px;">VO-Fortsetzung</div>
<div class="r" style="left:621px;top:587px;width:17px;height:17px;background:#ffffff;box-sizing:border-box;border:1px solid #8c8c8c;"></div>
<div class="t" style="left:644.28px;top:591.00px;font-size:12.7px;color:#1e1e1e;letter-spacing:0.120px;">Dringend</div>
<div class="r" style="left:765px;top:528px;width:17px;height:17px;background:#ffffff;box-sizing:border-box;border:1px solid #8c8c8c;"></div>
<div class="t" style="left:788.35px;top:532.00px;font-size:12.7px;color:#1e1e1e;letter-spacing:0.166px;">Unfall</div>
<div class="r" style="left:765px;top:556px;width:17px;height:17px;background:#ffffff;box-sizing:border-box;border:1px solid #8c8c8c;"></div>
<div class="t" style="left:788.92px;top:560.00px;font-size:12.7px;color:#1e1e1e;letter-spacing:0.009px;">Zuzahlung gemahnt</div>
<div class="r" style="left:765px;top:587px;width:17px;height:17px;background:#ffffff;box-sizing:border-box;border:1px solid #8c8c8c;"></div>
<div class="t" style="left:788.92px;top:591.00px;font-size:12.7px;color:#1e1e1e;letter-spacing:0.065px;">Zuzahlung abgetreten</div>
<div class="t" style="left:1229.40px;top:467.00px;font-size:20.4px;color:#1e1e1e;font-weight:bold;-webkit-text-stroke:0.3px currentColor;letter-spacing:0.091px;">Termine: 5</div>
<svg class="r" style="left:1707px;top:468px;" width="17" height="17" viewBox="0 0 17 17"><defs><radialGradient id="pl" cx="0.45" cy="0.35" r="0.7"><stop offset="0" stop-color="#a6d2fa"/><stop offset="1" stop-color="#2e78d0"/></radialGradient></defs><circle cx="8.5" cy="8.5" r="7.8" fill="url(#pl)" stroke="#2a68b8" stroke-width="0.6"/><path d="M8.5 4 V13 M4 8.5 H13" stroke="#fff" stroke-width="2.6"/></svg>
<svg class="r" style="left:1737px;top:467px;" width="16" height="16" viewBox="0 0 16 16"><path d="M2.5 12 L11 3.5 L13 5.5 L4.5 14Z" fill="#4a86d4" stroke="#2a5aa0" stroke-width="0.6"/><path d="M11 3.5 L12.3 2.2 L14.3 4.2 L13 5.5Z" fill="#e84050"/><path d="M2.5 12 L1.5 15 L4.5 14Z" fill="#222"/><rect x="1" y="15" width="14" height="1.2" fill="#b0b0b0"/></svg>
<svg class="r" style="left:1767px;top:468px;" width="17" height="17" viewBox="0 0 17 17"><defs><radialGradient id="rx0" cx="0.45" cy="0.35" r="0.7"><stop offset="0" stop-color="#f05050"/><stop offset="1" stop-color="#b81c1c"/></radialGradient></defs><circle cx="8.5" cy="8.5" r="7.8" fill="url(#rx0)" stroke="#b81c1c" stroke-width="0.6"/><path d="M5.3 5.3 L11.7 11.7 M11.7 5.3 L5.3 11.7" stroke="#f4f4f4" stroke-width="2.4"/></svg>
<svg class="r" style="left:1797px;top:468px;" width="16" height="16" viewBox="0 0 16 16"><rect x="1" y="1.5" width="14" height="13.5" fill="#f4f6fa" stroke="#6a88c0" stroke-width="0.8"/><rect x="1" y="1.5" width="14" height="3" fill="#e04848"/><rect x="3" y="7" width="4.5" height="4.5" fill="#d83030"/><circle cx="5.2" cy="9.2" r="1" fill="#fff"/><path d="M9.5 7.5 H13 M9.5 10 H13 M3 13 H13" stroke="#6a88c0" stroke-width="1" stroke-dasharray="1 1"/></svg>
<svg class="r" style="left:1827px;top:468px;" width="16" height="16" viewBox="0 0 16 16"><rect x="1" y="3" width="14" height="10.5" fill="#f4f8fc" stroke="#6a8cc8" stroke-width="0.9"/><path d="M1.5 3.5 L8 9 L14.5 3.5 M1.5 13 L6 8 M14.5 13 L10 8" fill="none" stroke="#6a8cc8" stroke-width="0.9"/></svg>
<svg class="r" style="left:1856px;top:468px;" width="17" height="16" viewBox="0 0 17 16"><rect x="1" y="0.8" width="15" height="4.2" fill="#eee" stroke="#9a9a9a" stroke-width="0.7"/><rect x="1" y="5.9" width="15" height="4.2" fill="#eee" stroke="#9a9a9a" stroke-width="0.7"/><rect x="1" y="11" width="15" height="4.2" fill="#eee" stroke="#9a9a9a" stroke-width="0.7"/><path d="M2.5 2.9 H8 M2.5 8 H8 M2.5 13.1 H8" stroke="#777" stroke-width="1.2"/></svg>
<div class="r" style="left:1216px;top:491px;width:664px;height:1px;background:#a0a0a0;"></div>
<div class="r" style="left:1216px;top:492px;width:664px;height:27px;background:#f0f0f0;"></div>
<div class="r" style="left:1216px;top:519px;width:664px;height:1px;background:#a0a0a0;"></div>
<div class="r" style="left:1250px;top:492px;width:1px;height:27px;background:#a0a0a0;"></div>
<div class="r" style="left:1287px;top:492px;width:1px;height:27px;background:#a0a0a0;"></div>
<div class="r" style="left:1435px;top:492px;width:1px;height:27px;background:#a0a0a0;"></div>
<div class="r" style="left:1582px;top:492px;width:1px;height:27px;background:#a0a0a0;"></div>
<div class="r" style="left:1729px;top:492px;width:1px;height:27px;background:#a0a0a0;"></div>
<div class="r" style="left:1260px;top:497px;width:17px;height:17px;background:#ffffff;box-sizing:border-box;border:1px solid #8c8c8c;"></div>
<div class="t" style="left:1292.50px;top:500.00px;font-size:12.5px;color:#7a7a7a;">Beginn</div>
<svg class="r" style="left:1414px;top:501px;" width="14" height="8" viewBox="0 0 14 8"><path d="M1 7 H13 L7 1Z" fill="#666"/></svg>
<div class="t" style="left:1440.75px;top:500.00px;font-size:12.5px;color:#7a7a7a;">Therapeut</div>
<div class="t" style="left:1587.00px;top:500.00px;font-size:12.5px;color:#7a7a7a;">Positionen</div>
<div class="t" style="left:1734.44px;top:500.00px;font-size:12.5px;color:#7a7a7a;">Status</div>
<div class="r" style="left:1251px;top:520px;width:629px;height:24px;background:#ffffff;"></div>
<div class="r" style="left:1251px;top:544px;width:629px;height:1px;background:#d8d8d8;"></div>
<div class="r" style="left:1251px;top:520px;width:36px;height:24px;background:#daa520;"></div>
<div class="r" style="left:1250px;top:520px;width:1px;height:25px;background:#d0d0d0;"></div>
<div class="r" style="left:1287px;top:520px;width:1px;height:25px;background:#d0d0d0;"></div>
<div class="r" style="left:1435px;top:520px;width:1px;height:25px;background:#d0d0d0;"></div>
<div class="r" style="left:1582px;top:520px;width:1px;height:25px;background:#d0d0d0;"></div>
<div class="r" style="left:1729px;top:520px;width:1px;height:25px;background:#d0d0d0;"></div>
<div class="r" style="left:1260px;top:523.5px;width:17px;height:17px;background:#ffffff;box-sizing:border-box;border:1px solid #8c8c8c;"></div>
<div class="t" style="left:1291.75px;top:526.00px;font-size:13px;color:#1e1e1e;letter-spacing:0.046px;">22.07.2025 00:00:00</div>
<div class="t" style="left:1587.38px;top:527.00px;font-size:12.5px;color:#1e1e1e;letter-spacing:-0.047px;">78300</div>
<svg class="r" style="left:1226px;top:527px;" width="6" height="10" viewBox="0 0 6 10"><path d="M0.5 0.5 L5.5 5 L0.5 9.5Z" fill="#666"/></svg>
<div class="r" style="left:1251px;top:545px;width:629px;height:24px;background:#d3d3d3;"></div>
<div class="r" style="left:1251px;top:569px;width:629px;height:1px;background:#d8d8d8;"></div>
<div class="r" style="left:1250px;top:545px;width:1px;height:25px;background:#d0d0d0;"></div>
<div class="r" style="left:1287px;top:545px;width:1px;height:25px;background:#d0d0d0;"></div>
<div class="r" style="left:1435px;top:545px;width:1px;height:25px;background:#d0d0d0;"></div>
<div class="r" style="left:1582px;top:545px;width:1px;height:25px;background:#d0d0d0;"></div>
<div class="r" style="left:1729px;top:545px;width:1px;height:25px;background:#d0d0d0;"></div>
<div class="r" style="left:1260px;top:548.5px;width:17px;height:17px;background:#ffffff;box-sizing:border-box;border:1px solid #8c8c8c;"></div>
<div class="t" style="left:1291.88px;top:551.00px;font-size:13px;color:#1e1e1e;letter-spacing:0.039px;">05.08.2025 00:00:00</div>
<div class="t" style="left:1587.38px;top:552.00px;font-size:12.5px;color:#1e1e1e;letter-spacing:-0.047px;">78300</div>
<div class="t" style="left:1224.38px;top:552.00px;font-size:12.5px;color:#1e1e1e;">2</div>
<div class="r" style="left:1251px;top:570px;width:629px;height:24px;background:#ffffff;"></div>
<div class="r" style="left:1251px;top:594px;width:629px;height:1px;background:#d8d8d8;"></div>
<div class="r" style="left:1250px;top:570px;width:1px;height:25px;background:#d0d0d0;"></div>
<div class="r" style="left:1287px;top:570px;width:1px;height:25px;background:#d0d0d0;"></div>
<div class="r" style="left:1435px;top:570px;width:1px;height:25px;background:#d0d0d0;"></div>
<div class="r" style="left:1582px;top:570px;width:1px;height:25px;background:#d0d0d0;"></div>
<div class="r" style="left:1729px;top:570px;width:1px;height:25px;background:#d0d0d0;"></div>
<div class="r" style="left:1260px;top:573.5px;width:17px;height:17px;background:#ffffff;box-sizing:border-box;border:1px solid #8c8c8c;"></div>
<div class="t" style="left:1291.43px;top:576.00px;font-size:13px;color:#1e1e1e;letter-spacing:0.064px;">19.08.2025 00:00:00</div>
<div class="t" style="left:1587.38px;top:577.00px;font-size:12.5px;color:#1e1e1e;letter-spacing:-0.047px;">78300</div>
<div class="t" style="left:1224.50px;top:577.00px;font-size:12.5px;color:#1e1e1e;">3</div>
<div class="r" style="left:1251px;top:595px;width:629px;height:24px;background:#d3d3d3;"></div>
<div class="r" style="left:1251px;top:619px;width:629px;height:1px;background:#d8d8d8;"></div>
<div class="r" style="left:1250px;top:595px;width:1px;height:25px;background:#d0d0d0;"></div>
<div class="r" style="left:1287px;top:595px;width:1px;height:25px;background:#d0d0d0;"></div>
<div class="r" style="left:1435px;top:595px;width:1px;height:25px;background:#d0d0d0;"></div>
<div class="r" style="left:1582px;top:595px;width:1px;height:25px;background:#d0d0d0;"></div>
<div class="r" style="left:1729px;top:595px;width:1px;height:25px;background:#d0d0d0;"></div>
<div class="r" style="left:1260px;top:598.5px;width:17px;height:17px;background:#ffffff;box-sizing:border-box;border:1px solid #8c8c8c;"></div>
<div class="t" style="left:1291.43px;top:601.00px;font-size:13px;color:#1e1e1e;letter-spacing:0.064px;">16.09.2025 00:00:00</div>
<div class="t" style="left:1587.38px;top:602.00px;font-size:12.5px;color:#1e1e1e;letter-spacing:-0.047px;">78300</div>
<div class="t" style="left:1224.75px;top:602.00px;font-size:12.5px;color:#1e1e1e;">4</div>
<div class="r" style="left:1251px;top:620px;width:629px;height:24px;background:#ffffff;"></div>
<div class="r" style="left:1251px;top:644px;width:629px;height:1px;background:#d8d8d8;"></div>
<div class="r" style="left:1250px;top:620px;width:1px;height:25px;background:#d0d0d0;"></div>
<div class="r" style="left:1287px;top:620px;width:1px;height:25px;background:#d0d0d0;"></div>
<div class="r" style="left:1435px;top:620px;width:1px;height:25px;background:#d0d0d0;"></div>
<div class="r" style="left:1582px;top:620px;width:1px;height:25px;background:#d0d0d0;"></div>
<div class="r" style="left:1729px;top:620px;width:1px;height:25px;background:#d0d0d0;"></div>
<div class="r" style="left:1260px;top:623.5px;width:17px;height:17px;background:#ffffff;box-sizing:border-box;border:1px solid #8c8c8c;"></div>
<div class="t" style="left:1291.88px;top:626.00px;font-size:13px;color:#1e1e1e;letter-spacing:0.039px;">30.09.2025 00:00:00</div>
<div class="t" style="left:1587.38px;top:627.00px;font-size:12.5px;color:#1e1e1e;letter-spacing:-0.047px;">78300</div>
<div class="t" style="left:1224.50px;top:627.00px;font-size:12.5px;color:#1e1e1e;">5</div>
<div class="r" style="left:1250px;top:644px;width:630px;height:1px;background:#c0c0c0;"></div>
<div class="r" style="left:11px;top:703px;width:1866px;height:201px;background:#ffffff;box-sizing:border-box;border:1px solid #c9a40c;"></div>
<div class="r" style="left:12px;top:704px;width:1864px;height:1px;background:#c8c8c8;"></div>
<div class="r" style="left:12px;top:705px;width:1864px;height:27px;background:#f0f0f0;"></div>
<div class="r" style="left:12px;top:732px;width:1864px;height:1px;background:#a0a0a0;"></div>
<div class="r" style="left:40px;top:705px;width:1px;height:27px;background:#a8a8a8;"></div>
<div class="r" style="left:146px;top:705px;width:1px;height:27px;background:#a8a8a8;"></div>
<div class="r" style="left:1854px;top:705px;width:1px;height:27px;background:#a8a8a8;"></div>
<div class="t" style="left:45.74px;top:713.00px;font-size:12.5px;color:#7a7a7a;">Status</div>
<div class="t" style="left:151.00px;top:713.00px;font-size:12.5px;color:#7a7a7a;">Meldung</div>
<div class="r" style="left:12px;top:733px;width:1843px;height:169px;overflow:hidden;">
<div class="r" style="left:134px;top:0px;width:1709px;height:25px;background:#ffffff;"></div>
<div class="r" style="left:134px;top:24px;width:1709px;height:1px;background:#dadada;"></div>
<div class="r" style="left:28px;top:0px;width:106px;height:24px;background:#ffd700;"></div>
<div class="r" style="left:28px;top:24px;width:106px;height:1px;background:#e8dca0;"></div>
<div class="t" style="left:32.5px;top:7px;font-size:12.5px;color:#333;">Hinweis</div>
<div class="t" style="left:138.77px;top:7px;font-size:12.9px;color:#1e1e1e;letter-spacing:0.0233px;">Die el. Gesundheitskarte wurde zuletzt vor mehr als drei Monaten eingelesen [M27]</div>
<div class="r" style="left:134px;top:25px;width:1709px;height:25px;background:#d3d3d3;"></div>
<div class="r" style="left:134px;top:49px;width:1709px;height:1px;background:#dadada;"></div>
<div class="r" style="left:28px;top:25px;width:106px;height:24px;background:#ffd700;"></div>
<div class="r" style="left:28px;top:49px;width:106px;height:1px;background:#e8dca0;"></div>
<div class="t" style="left:32.5px;top:32px;font-size:12.5px;color:#333;">Hinweis</div>
<div class="t" style="left:138.77px;top:32px;font-size:12.9px;color:#1e1e1e;letter-spacing:0.0168px;">Die Heilmittelposition 78100 muss auf der Empfangsbestätigung wie folgt dokumentiert sein: Erstbefundung groß. [M189] &lt;INFO&gt;</div>
<div class="r" style="left:134px;top:50px;width:1709px;height:25px;background:#ffffff;"></div>
<div class="r" style="left:134px;top:74px;width:1709px;height:1px;background:#dadada;"></div>
<div class="r" style="left:28px;top:50px;width:106px;height:24px;background:#ffd700;"></div>
<div class="r" style="left:28px;top:74px;width:106px;height:1px;background:#e8dca0;"></div>
<div class="t" style="left:32.5px;top:57px;font-size:12.5px;color:#333;">Hinweis</div>
<div class="t" style="left:138.77px;top:57px;font-size:12.9px;color:#1e1e1e;letter-spacing:0.0498px;">Die Heilmittelposition 78300 muss auf der Empfangsbestätigung wie folgt dokumentiert sein: Anp. mehrteilig. [M189] &lt;INFO&gt;</div>
<div class="r" style="left:134px;top:75px;width:1709px;height:25px;background:#d3d3d3;"></div>
<div class="r" style="left:134px;top:99px;width:1709px;height:1px;background:#dadada;"></div>
<div class="r" style="left:28px;top:75px;width:106px;height:24px;background:#ffd700;"></div>
<div class="r" style="left:28px;top:99px;width:106px;height:1px;background:#e8dca0;"></div>
<div class="t" style="left:32.5px;top:82px;font-size:12.5px;color:#333;">Hinweis</div>
<div class="t" style="left:138.77px;top:82px;font-size:12.9px;color:#1e1e1e;letter-spacing:0.0267px;">Die Heilmittelposition 78510 muss auf der Empfangsbestätigung wie folgt dokumentiert sein: Kontrolle. [M189] &lt;INFO&gt;</div>
<div class="r" style="left:134px;top:100px;width:1709px;height:25px;background:#ffffff;"></div>
<div class="r" style="left:134px;top:124px;width:1709px;height:1px;background:#dadada;"></div>
<div class="r" style="left:28px;top:100px;width:106px;height:24px;background:#ffd700;"></div>
<div class="r" style="left:28px;top:124px;width:106px;height:1px;background:#e8dca0;"></div>
<div class="t" style="left:32.5px;top:107px;font-size:12.5px;color:#333;">Hinweis</div>
<div class="t" style="left:138.77px;top:107px;font-size:12.9px;color:#1e1e1e;letter-spacing:0.0157px;">Die Heilmittelposition 78520 muss auf der Empfangsbestätigung wie folgt dokumentiert sein: Abschluss. [M189] &lt;INFO&gt;</div>
<div class="r" style="left:134px;top:125px;width:1709px;height:25px;background:#d3d3d3;"></div>
<div class="r" style="left:134px;top:149px;width:1709px;height:1px;background:#dadada;"></div>
<div class="r" style="left:28px;top:125px;width:106px;height:24px;background:#ffd700;"></div>
<div class="r" style="left:28px;top:149px;width:106px;height:1px;background:#e8dca0;"></div>
<div class="t" style="left:32.5px;top:132px;font-size:12.5px;color:#333;">Hinweis</div>
<div class="t" style="left:138.77px;top:132px;font-size:12.9px;color:#1e1e1e;letter-spacing:0.0869px;">Es gibt Termine denen kein Therapeut zugewiesen ist [M114]</div>
<div class="r" style="left:134px;top:150px;width:1709px;height:25px;background:#ffffff;"></div>
<div class="r" style="left:134px;top:174px;width:1709px;height:1px;background:#dadada;"></div>
<div class="r" style="left:28px;top:150px;width:106px;height:24px;background:#ffd700;"></div>
<div class="r" style="left:28px;top:174px;width:106px;height:1px;background:#e8dca0;"></div>
<div class="t" style="left:32.5px;top:157px;font-size:12.5px;color:#333;">Hinweis</div>
<div class="t" style="left:138.77px;top:157px;font-size:12.9px;color:#1e1e1e;letter-spacing:0.0487px;">Mögliche Anzahl an Sitzungen nicht wahrgenommen (1. Heilmittel) [M89]</div>
<div class="r" style="left:28px;top:0px;width:106px;height:24px;box-sizing:border-box;border:1px dotted #222;"></div>
</div>
<svg class="r" style="left:23px;top:740px;" width="6" height="10" viewBox="0 0 6 10"><path d="M0.5 0.5 L5.5 5 L0.5 9.5Z" fill="#777"/></svg>
<div class="r" style="left:1855px;top:733px;width:21px;height:170px;background:#f0f0f0;"></div>
<div class="r" style="left:1855px;top:734px;width:19px;height:20px;background:#ffffff;box-sizing:border-box;border:1px solid #a0a0a0;"></div>
<div class="r" style="left:1855px;top:754px;width:19px;height:47px;background:#ffffff;box-sizing:border-box;border:1px solid #a0a0a0;"></div>
<div class="r" style="left:1855px;top:881px;width:19px;height:20px;background:#ffffff;box-sizing:border-box;border:1px solid #a0a0a0;"></div>
<svg class="r" style="left:1860px;top:740px;" width="10" height="6" viewBox="0 0 10 6"><path d="M1 5 H9 L5 1Z" fill="#666"/></svg>
<svg class="r" style="left:1860px;top:888px;" width="10" height="6" viewBox="0 0 10 6"><path d="M1 1 H9 L5 5Z" fill="#666"/></svg>
<div class="r" style="left:117px;top:904px;width:405px;height:29px;background:#dcdcdc;box-sizing:border-box;border:1px solid #c8c8c8;border-top:none;"></div>
<div class="r" style="left:205px;top:904px;width:1px;height:28px;background:#c8c8c8;"></div>
<div class="r" style="left:328px;top:904px;width:1px;height:28px;background:#c8c8c8;"></div>
<div class="r" style="left:428px;top:904px;width:1px;height:28px;background:#c8c8c8;"></div>
<div class="r" style="left:11px;top:903px;width:107px;height:30px;background:#f0f0f0;box-sizing:border-box;border:1px solid #c9a40c;border-top:none;"></div>
<svg class="r" style="left:18px;top:909px;" width="18" height="16" viewBox="0 0 18 16"><defs><linearGradient id="wn" x1="0" y1="0" x2="0" y2="1"><stop offset="0" stop-color="#fff4d0"/><stop offset="1" stop-color="#f2b860"/></linearGradient></defs><path d="M9 1.5 L16.8 14.5 H1.2Z" fill="url(#wn)" stroke="#c87830" stroke-width="1.1" stroke-linejoin="round"/><rect x="8.2" y="5.5" width="1.6" height="5" fill="#333"/><rect x="8.2" y="11.5" width="1.6" height="1.6" fill="#333"/></svg>
<div class="t" style="left:37.93px;top:911.00px;font-size:13.2px;color:#111;font-weight:bold;-webkit-text-stroke:0.3px currentColor;letter-spacing:0.138px;">Validierung</div>
<div class="t" style="left:123.34px;top:911.00px;font-size:13.2px;color:#111;font-weight:bold;-webkit-text-stroke:0.3px currentColor;letter-spacing:0.559px;">Historie (6)</div>
<div class="t" style="left:211.54px;top:911.00px;font-size:13.2px;color:#111;font-weight:bold;-webkit-text-stroke:0.3px currentColor;letter-spacing:0.134px;">Preisberechnung</div>
<div class="t" style="left:334.67px;top:911.00px;font-size:13.2px;color:#111;font-weight:bold;-webkit-text-stroke:0.3px currentColor;letter-spacing:0.399px;">Absetzungen</div>
<div class="t" style="left:434.44px;top:911.00px;font-size:13.2px;color:#111;font-weight:bold;-webkit-text-stroke:0.3px currentColor;letter-spacing:0.136px;">Rechnungen</div>
<div class="r" style="left:120px;top:941px;width:403px;height:5px;background:#d6d6d6;"></div>
<div class="r" style="left:207px;top:941px;width:1px;height:5px;background:#c4c4c4;"></div>
<div class="r" style="left:330px;top:941px;width:1px;height:5px;background:#c4c4c4;"></div>
<div class="r" style="left:429px;top:941px;width:1px;height:5px;background:#c4c4c4;"></div>
<div class="r" style="left:13px;top:941px;width:1px;height:6px;background:#c9a40c;"></div>
<div class="r" style="left:119px;top:941px;width:1px;height:6px;background:#c9a40c;"></div>
<div class="r" style="left:13px;top:945px;width:107px;height:1px;background:#c9a40c;"></div>
<div class="r" style="left:1px;top:941px;width:1px;height:14px;background:#8a8a8a;"></div></body></html>
